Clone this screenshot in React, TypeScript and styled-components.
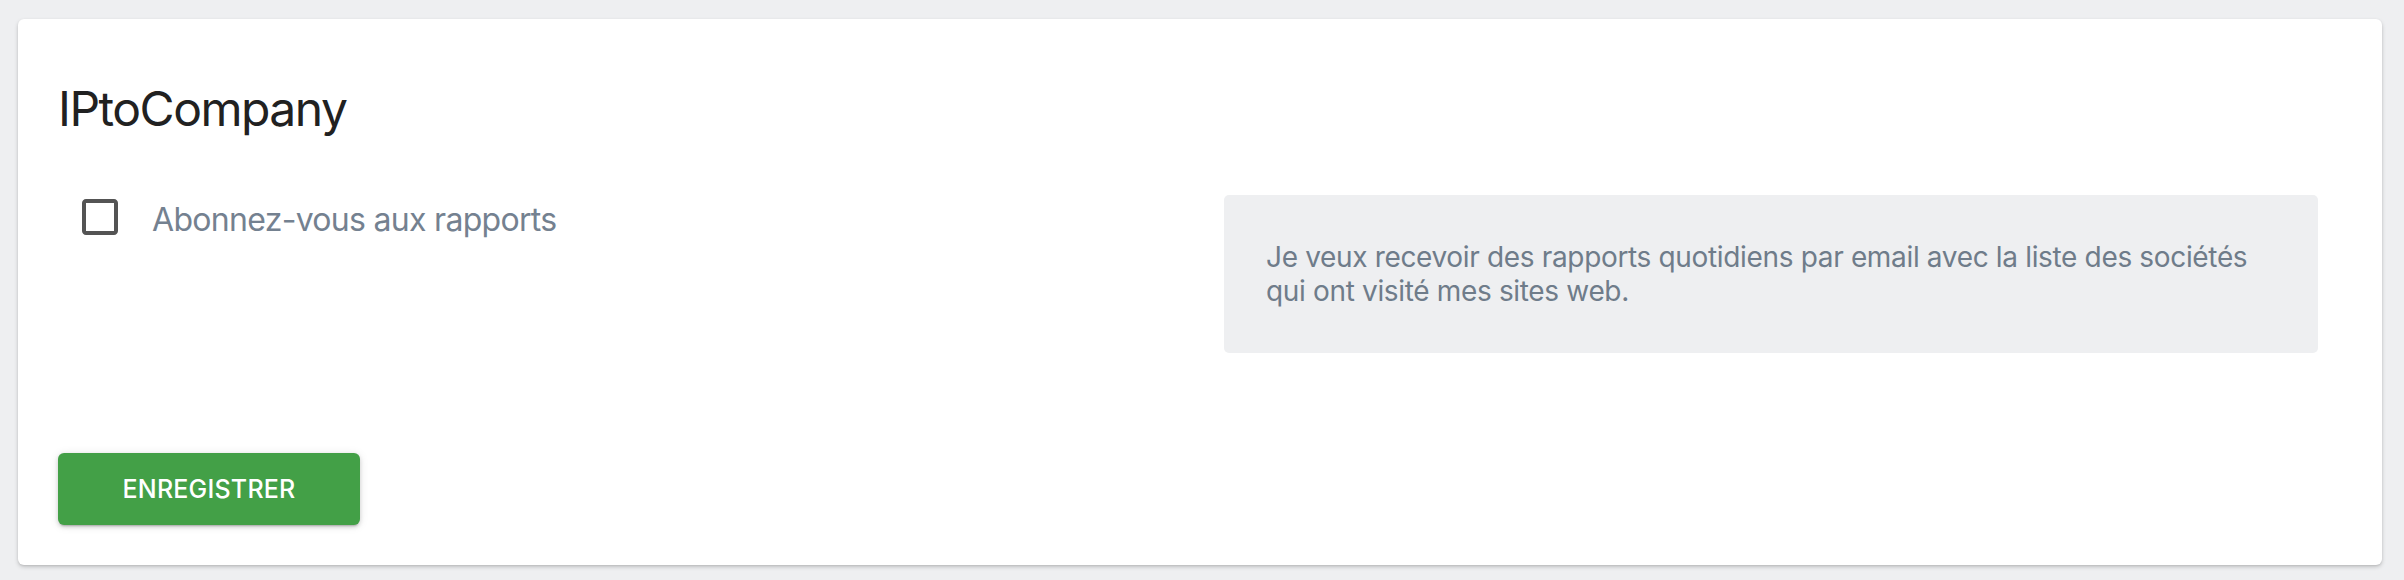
import React, { useState } from "react";
import styled, { createGlobalStyle } from "styled-components";

const GlobalStyle = createGlobalStyle`
  html, body {
    margin: 0;
    padding: 0;
    background: #eeeff1;
    font-family: Inter, "Noto Sans", Roboto, sans-serif;
  }
  * { box-sizing: border-box; }
`;

const Page = styled.div`
  padding: 19px 22px 15px 18px;
`;

const Card = styled.section`
  background: #ffffff;
  border-radius: 6px;
  box-shadow: 0 2px 4px rgba(0, 0, 0, 0.18), 0 1px 2px rgba(0, 0, 0, 0.08);
  height: 546px;
  padding: 61px 64px 40px 40px;
  display: flex;
  flex-direction: column;
`;

const Title = styled.h2`
  margin: 0;
  font-size: 48px;
  font-weight: 400;
  line-height: 58px;
  color: #212121;
  letter-spacing: -1.5px;
`;

const Row = styled.div`
  display: grid;
  grid-template-columns: 1fr 1094px;
  margin-top: 37px;
  align-items: start;
`;

const CheckLabel = styled.label`
  display: flex;
  align-items: center;
  cursor: pointer;
  user-select: none;
`;

const CheckWrap = styled.span`
  display: inline-flex;
  padding: 18px;
`;

const CheckSvg = styled.svg`
  width: 48px;
  height: 48px;
  display: block;
`;

const LabelText = styled.span`
  font-size: 32px;
  line-height: 40px;
  color: #748190;
  margin-left: 10px;
  margin-top: 6px;
  letter-spacing: -0.7px;
`;

const InfoBox = styled.div`
  margin-top: 20px;
  background: #eeeff1;
  border-radius: 5px;
  padding: 45px 40px 45px 42px;
  font-size: 28px;
  line-height: 34px;
  color: #6f7c8a;
  letter-spacing: -0.34px;
`;

const Footer = styled.div`
  margin-top: auto;
  display: flex;
`;

const SaveButton = styled.button`
  width: 302px;
  height: 72px;
  border: none;
  border-radius: 6px;
  background: #43a047;
  color: #ffffff;
  font-family: Inter, Roboto, sans-serif;
  font-size: 25px;
  font-weight: 500;
  letter-spacing: 0.2px;
  text-transform: uppercase;
  box-shadow: 0 3px 2px -2px rgba(0, 0, 0, 0.2), 0 2px 4px 0 rgba(0, 0, 0, 0.14),
    0 1px 10px 0 rgba(0, 0, 0, 0.1);
  cursor: pointer;
`;

export default function App() {
  const [checked, setChecked] = useState(false);
  return (
    <>
      <GlobalStyle />
      <Page>
        <Card>
          <Title>IPtoCompany</Title>
          <Row>
            <CheckLabel onClick={() => setChecked(!checked)}>
              <CheckWrap>
                <CheckSvg viewBox="0 0 24 24">
                  {checked ? (
                    <path
                      fill="#545454"
                      d="M19 3H5c-1.11 0-2 .9-2 2v14c0 1.1.89 2 2 2h14c1.11 0 2-.9 2-2V5c0-1.1-.89-2-2-2zm-9 14l-5-5 1.41-1.41L10 14.17l7.59-7.59L19 8l-9 9z"
                    />
                  ) : (
                    <path
                      fill="#545454"
                      d="M19 5v14H5V5h14m0-2H5c-1.1 0-2 .9-2 2v14c0 1.1.9 2 2 2h14c1.1 0 2-.9 2-2V5c0-1.1-.9-2-2-2z"
                    />
                  )}
                </CheckSvg>
              </CheckWrap>
              <LabelText>Abonnez-vous aux rapports</LabelText>
            </CheckLabel>
            <InfoBox>
              Je veux recevoir des rapports quotidiens par email avec la liste des sociétés
              <br />
              qui ont visité mes sites web.
            </InfoBox>
          </Row>
          <Footer>
            <SaveButton type="button">Enregistrer</SaveButton>
          </Footer>
        </Card>
      </Page>
    </>
  );
}
